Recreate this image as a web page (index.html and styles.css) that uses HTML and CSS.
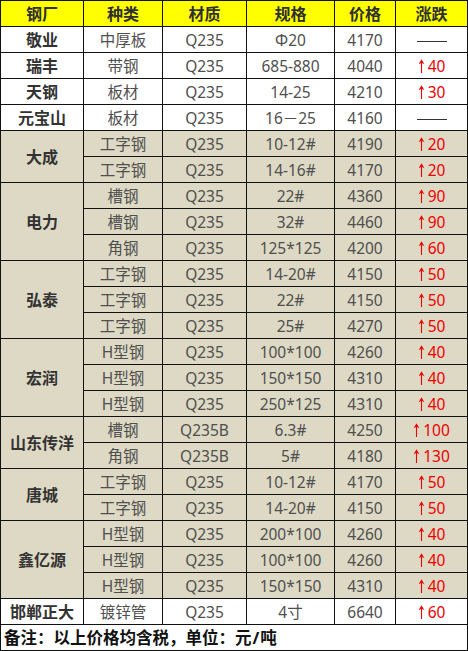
FILE: index.html
```html
<!DOCTYPE html>
<html lang="zh">
<head>
<meta charset="utf-8">
<title>钢材价格</title>
<link rel="stylesheet" href="styles.css">
</head>
<body>
<table class="price-table">
  <colgroup>
    <col class="c1"><col class="c2"><col class="c3"><col class="c4"><col class="c5"><col class="c6">
  </colgroup>
  <thead>
    <tr class="head"><th>钢厂</th><th>种类</th><th>材质</th><th>规格</th><th>价格</th><th>涨跌</th></tr>
  </thead>
  <tbody>
    <tr><td class="mill">敬业</td><td>中厚板</td><td>Q235</td><td>Φ20</td><td>4170</td><td class="chg"><span class="dash"></span></td></tr>
    <tr><td class="mill">瑞丰</td><td>带钢</td><td>Q235</td><td>685-880</td><td>4040</td><td class="chg up"><svg class="arr" viewBox="0 0 7 14"><path d="M3.5 14V2"/><path class="hd" d="M0.6 5.2L3.5 0.2L6.4 5.2L3.5 3.8Z"/></svg>40</td></tr>
    <tr><td class="mill">天钢</td><td>板材</td><td>Q235</td><td>14-25</td><td>4210</td><td class="chg up"><svg class="arr" viewBox="0 0 7 14"><path d="M3.5 14V2"/><path class="hd" d="M0.6 5.2L3.5 0.2L6.4 5.2L3.5 3.8Z"/></svg>30</td></tr>
    <tr><td class="mill">元宝山</td><td>板材</td><td>Q235</td><td>16－25</td><td>4160</td><td class="chg"><span class="dash"></span></td></tr>

    <tr class="tan"><td class="mill" rowspan="2">大成</td><td>工字钢</td><td>Q235</td><td>10-12#</td><td>4190</td><td class="chg up"><svg class="arr" viewBox="0 0 7 14"><path d="M3.5 14V2"/><path class="hd" d="M0.6 5.2L3.5 0.2L6.4 5.2L3.5 3.8Z"/></svg>20</td></tr>
    <tr class="tan"><td>工字钢</td><td>Q235</td><td>14-16#</td><td>4170</td><td class="chg up"><svg class="arr" viewBox="0 0 7 14"><path d="M3.5 14V2"/><path class="hd" d="M0.6 5.2L3.5 0.2L6.4 5.2L3.5 3.8Z"/></svg>20</td></tr>

    <tr class="tan"><td class="mill" rowspan="3">电力</td><td>槽钢</td><td>Q235</td><td>22#</td><td>4360</td><td class="chg up"><svg class="arr" viewBox="0 0 7 14"><path d="M3.5 14V2"/><path class="hd" d="M0.6 5.2L3.5 0.2L6.4 5.2L3.5 3.8Z"/></svg>90</td></tr>
    <tr class="tan"><td>槽钢</td><td>Q235</td><td>32#</td><td>4460</td><td class="chg up"><svg class="arr" viewBox="0 0 7 14"><path d="M3.5 14V2"/><path class="hd" d="M0.6 5.2L3.5 0.2L6.4 5.2L3.5 3.8Z"/></svg>90</td></tr>
    <tr class="tan"><td>角钢</td><td>Q235</td><td>125*125</td><td>4200</td><td class="chg up"><svg class="arr" viewBox="0 0 7 14"><path d="M3.5 14V2"/><path class="hd" d="M0.6 5.2L3.5 0.2L6.4 5.2L3.5 3.8Z"/></svg>60</td></tr>

    <tr class="tan"><td class="mill" rowspan="3">弘泰</td><td>工字钢</td><td>Q235</td><td>14-20#</td><td>4150</td><td class="chg up"><svg class="arr" viewBox="0 0 7 14"><path d="M3.5 14V2"/><path class="hd" d="M0.6 5.2L3.5 0.2L6.4 5.2L3.5 3.8Z"/></svg>50</td></tr>
    <tr class="tan"><td>工字钢</td><td>Q235</td><td>22#</td><td>4150</td><td class="chg up"><svg class="arr" viewBox="0 0 7 14"><path d="M3.5 14V2"/><path class="hd" d="M0.6 5.2L3.5 0.2L6.4 5.2L3.5 3.8Z"/></svg>50</td></tr>
    <tr class="tan"><td>工字钢</td><td>Q235</td><td>25#</td><td>4270</td><td class="chg up"><svg class="arr" viewBox="0 0 7 14"><path d="M3.5 14V2"/><path class="hd" d="M0.6 5.2L3.5 0.2L6.4 5.2L3.5 3.8Z"/></svg>50</td></tr>

    <tr class="tan"><td class="mill" rowspan="3">宏润</td><td>H型钢</td><td>Q235</td><td>100*100</td><td>4260</td><td class="chg up"><svg class="arr" viewBox="0 0 7 14"><path d="M3.5 14V2"/><path class="hd" d="M0.6 5.2L3.5 0.2L6.4 5.2L3.5 3.8Z"/></svg>40</td></tr>
    <tr class="tan"><td>H型钢</td><td>Q235</td><td>150*150</td><td>4310</td><td class="chg up"><svg class="arr" viewBox="0 0 7 14"><path d="M3.5 14V2"/><path class="hd" d="M0.6 5.2L3.5 0.2L6.4 5.2L3.5 3.8Z"/></svg>40</td></tr>
    <tr class="tan"><td>H型钢</td><td>Q235</td><td>250*125</td><td>4310</td><td class="chg up"><svg class="arr" viewBox="0 0 7 14"><path d="M3.5 14V2"/><path class="hd" d="M0.6 5.2L3.5 0.2L6.4 5.2L3.5 3.8Z"/></svg>40</td></tr>

    <tr class="tan"><td class="mill" rowspan="2">山东传洋</td><td>槽钢</td><td>Q235B</td><td>6.3#</td><td>4250</td><td class="chg up"><svg class="arr" viewBox="0 0 7 14"><path d="M3.5 14V2"/><path class="hd" d="M0.6 5.2L3.5 0.2L6.4 5.2L3.5 3.8Z"/></svg>100</td></tr>
    <tr class="tan"><td>角钢</td><td>Q235B</td><td>5#</td><td>4180</td><td class="chg up"><svg class="arr" viewBox="0 0 7 14"><path d="M3.5 14V2"/><path class="hd" d="M0.6 5.2L3.5 0.2L6.4 5.2L3.5 3.8Z"/></svg>130</td></tr>

    <tr class="tan"><td class="mill" rowspan="2">唐城</td><td>工字钢</td><td>Q235</td><td>10-12#</td><td>4170</td><td class="chg up"><svg class="arr" viewBox="0 0 7 14"><path d="M3.5 14V2"/><path class="hd" d="M0.6 5.2L3.5 0.2L6.4 5.2L3.5 3.8Z"/></svg>50</td></tr>
    <tr class="tan"><td>工字钢</td><td>Q235</td><td>14-20#</td><td>4150</td><td class="chg up"><svg class="arr" viewBox="0 0 7 14"><path d="M3.5 14V2"/><path class="hd" d="M0.6 5.2L3.5 0.2L6.4 5.2L3.5 3.8Z"/></svg>50</td></tr>

    <tr class="tan"><td class="mill" rowspan="3">鑫亿源</td><td>H型钢</td><td>Q235</td><td>200*100</td><td>4260</td><td class="chg up"><svg class="arr" viewBox="0 0 7 14"><path d="M3.5 14V2"/><path class="hd" d="M0.6 5.2L3.5 0.2L6.4 5.2L3.5 3.8Z"/></svg>40</td></tr>
    <tr class="tan"><td>H型钢</td><td>Q235</td><td>100*100</td><td>4260</td><td class="chg up"><svg class="arr" viewBox="0 0 7 14"><path d="M3.5 14V2"/><path class="hd" d="M0.6 5.2L3.5 0.2L6.4 5.2L3.5 3.8Z"/></svg>40</td></tr>
    <tr class="tan"><td>H型钢</td><td>Q235</td><td>150*150</td><td>4310</td><td class="chg up"><svg class="arr" viewBox="0 0 7 14"><path d="M3.5 14V2"/><path class="hd" d="M0.6 5.2L3.5 0.2L6.4 5.2L3.5 3.8Z"/></svg>40</td></tr>

    <tr><td class="mill">邯郸正大</td><td>镀锌管</td><td>Q235</td><td>4寸</td><td>6640</td><td class="chg up"><svg class="arr" viewBox="0 0 7 14"><path d="M3.5 14V2"/><path class="hd" d="M0.6 5.2L3.5 0.2L6.4 5.2L3.5 3.8Z"/></svg>60</td></tr>
  </tbody>
  <tfoot>
    <tr><td class="note" colspan="6">备注：以上价格均含税，单位：元<span class="slash">/</span>吨</td></tr>
  </tfoot>
</table>
</body>
</html>
```

FILE: styles.css
```css
html, body {
  margin: 0;
  padding: 0;
  background: #ffffff;
}

.price-table {
  border-collapse: collapse;
  table-layout: fixed;
  width: 467px;
  font-family: "Noto Sans", "Noto Sans CJK SC", sans-serif;
  font-size: 15.5px;
  color: #4f4f4f;
}

.c1 { width: 83px; }
.c2 { width: 79px; }
.c3 { width: 84px; }
.c4 { width: 88px; }
.c5 { width: 61px; }
.c6 { width: 72px; }

.price-table th,
.price-table td {
  border: 1px solid #111111;
  height: 25px;
  padding: 0;
  text-align: center;
  vertical-align: middle;
  line-height: 24px;
  white-space: nowrap;
  overflow: hidden;
}

.head th {
  background: #ffff00;
  color: #303030;
  font-weight: bold;
  font-size: 16px;
}

.tan td {
  background: #ddd9c4;
}

.mill {
  font-weight: bold;
  color: #333333;
  font-size: 16px;
}

.chg {
  color: #3a3a3a;
}

.dash {
  display: inline-block;
  width: 30px;
  height: 1px;
  background: #333333;
  vertical-align: middle;
}

.up {
  color: #ee0000;
}

.arr {
  width: 7px;
  height: 14px;
  margin-right: 3px;
  vertical-align: -1px;
}

.arr path {
  stroke: #ee0000;
  stroke-width: 1.1;
  fill: none;
}

.arr .hd {
  fill: #ee0000;
  stroke: none;
}

.note {
  text-align: left !important;
  padding-left: 3px !important;
  font-weight: bold;
  color: #111111;
  font-size: 16.5px;
}

.slash {
  padding: 0 1px;
}
```
